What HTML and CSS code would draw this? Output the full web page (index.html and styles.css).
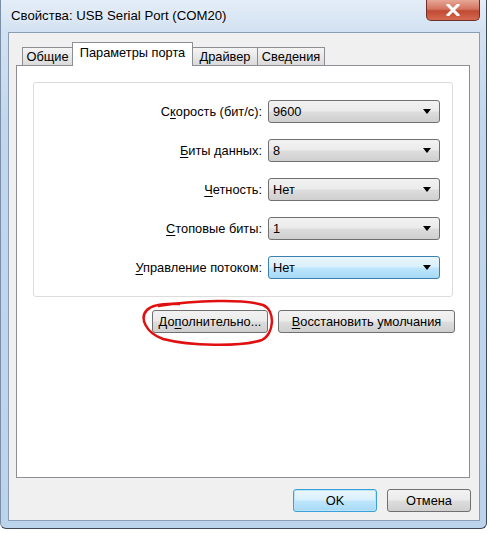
FILE: index.html
```html
<!DOCTYPE html>
<html lang="ru">
<head>
	<meta charset="UTF-8">
	<title>Свойства: USB Serial Port (COM20)</title>
	<link rel="stylesheet" href="styles.css">
</head>
<body>
	<div class="window">
		<div class="titlebar">
			<span class="title">Свойства: USB Serial Port (COM20)</span>
			<div class="close">
				<svg width="14" height="12" viewBox="0 0 14 12"><path d="M2 1 L12 11 M12 1 L2 11" stroke="#fff" stroke-width="3" stroke-linecap="square"/></svg>
			</div>
		</div>
		<div class="client">
			<div class="tabs">
				<div class="tab t1">Общие</div>
				<div class="tab t2 on">Параметры порта</div>
				<div class="tab t3">Драйвер</div>
				<div class="tab t4">Сведения</div>
			</div>
			<div class="panel">
				<div class="group">
					<div class="row">
						<span class="label">С<u>к</u>орость (бит/с):</span>
						<div class="combo"><span>9600</span><i class="arrow"></i></div>
					</div>
					<div class="row">
						<span class="label"><u>Б</u>иты данных:</span>
						<div class="combo"><span>8</span><i class="arrow"></i></div>
					</div>
					<div class="row">
						<span class="label"><u>Ч</u>етность:</span>
						<div class="combo"><span>Нет</span><i class="arrow"></i></div>
					</div>
					<div class="row">
						<span class="label"><u>С</u>топовые биты:</span>
						<div class="combo"><span>1</span><i class="arrow"></i></div>
					</div>
					<div class="row">
						<span class="label"><u>У</u>правление потоком:</span>
						<div class="combo focus"><span>Нет</span><i class="arrow"></i></div>
					</div>
				</div>
				<div class="actions">
					<div class="btn more">До<u>п</u>олнительно...</div>
					<div class="btn reset"><u>В</u>осстановить умолчания</div>
				</div>
			</div>
			<div class="footer">
				<div class="btn ok">OK</div>
				<div class="btn cancel">Отмена</div>
			</div>
		</div>
		<!-- пометки красным поверх окна -->
		<svg class="marks" width="490" height="533">
			<path d="M75 62 L186 62" stroke="#e01010" stroke-width="2.5" fill="none"/>
			<path d="M158 306 C195 300 245 299 263 305 C276 311 274 334 262 340 C240 347 190 346 163 339 C146 333 139 318 147 310 C152 305 162 303 180 304" stroke="#e01010" stroke-width="2.5" fill="none"/>
		</svg>
	</div>
</body>
</html>
```
FILE: styles.css
```css
*{margin:0; padding:0; box-sizing:border-box;}
body{background:#fff; font-family:"Liberation Sans", Arial, sans-serif; font-size:12.8px; color:#000;}
u{text-decoration:underline; text-underline-offset:2px;}

.window{position:relative; width:487px; height:529px; padding:0 6px 7px 7px; border-left:1px solid #7b8ea6; border-right:1px solid #3e4a58; border-bottom:1px solid #3e4a58; border-radius:0 0 6px 6px; background:linear-gradient(to bottom, #e4edf7 0, #d3e2f3 30px, #c2d7ee 120px, #bcd3ec 100%);}

.titlebar{height:32px; display:flex; justify-content:space-between; align-items:flex-start;}
.title{padding:8px 0 0 3px; font-size:13.2px; text-shadow:0 0 6px #fff;}
.close{width:54px; height:21px; display:flex; align-items:center; justify-content:center; border:1px solid #6d2f27; border-top:none; border-radius:0 0 5px 5px; background:linear-gradient(to bottom, #e7a796 0, #d47460 45%, #c14a34 55%, #d46a4f 100%);}

.client{height:489px; border:1px solid #8a9db5; background:#f0f0f0; padding:9px 9px 0 7px;}

.tabs{height:23px; display:flex; align-items:flex-end; padding-left:6px;}
.tab{height:18px; border:1px solid #8c8e94; border-bottom:none; border-right:none; background:linear-gradient(to bottom, #f4f4f4 0, #e8e8e8 50%, #dadada 100%); text-align:center; line-height:17px;}
.t1{width:50px;}
.t2{width:121px;}
.t3{width:65px;}
.t4{width:68px; border-right:1px solid #8c8e94;}
.tab.on{height:24px; margin-bottom:-1px; position:relative; z-index:1; background:#fff; border-right:1px solid #8c8e94; line-height:20px; margin-right:-1px;}

.panel{height:413px; border:1px solid #8c8e94; background:#fff; padding:16px 16px 0 16px;}
.group{border:1px solid #dcdcdc; border-radius:3px; padding:17px 12px 18px; display:flex; flex-direction:column; gap:17px;}
.row{display:flex; justify-content:flex-end; align-items:center; gap:6px; height:22px;}
.combo{width:172px; height:23px; border:1px solid #707070; border-radius:3px; background:linear-gradient(to bottom, #f2f2f2 0, #ebebeb 48%, #dddddd 52%, #cfcfcf 100%); display:flex; align-items:center; justify-content:space-between; padding:0 8px 0 4px;}
.combo.focus{border-color:#3c7fb1; background:linear-gradient(to bottom, #eaf6fd 0, #d9f0fc 48%, #bee6fd 52%, #a7d9f5 100%);}
.arrow{width:0; height:0; border-left:4px solid transparent; border-right:4px solid transparent; border-top:5px solid #000;}

.actions{display:flex; justify-content:flex-end; gap:10px; margin:13px -2px 0 0;}
.btn{height:23px; border:1px solid #707070; border-radius:3px; background:linear-gradient(to bottom, #f2f2f2 0, #ebebeb 48%, #dddddd 52%, #cfcfcf 100%); display:flex; align-items:center; justify-content:center;}
.more{width:116px;}
.reset{width:177px;}

.footer{display:flex; justify-content:flex-end; gap:10px; margin:11px -1px 0 0;}
.ok{width:84px; border-color:#3c9fd8; background:linear-gradient(to bottom, #eaf6fd 0, #d9f0fc 48%, #bee6fd 52%, #a7d9f5 100%); box-shadow:inset 0 0 0 1px #b9e4fb;}
.cancel{width:84px;}

.marks{position:absolute; left:-1px; top:0; pointer-events:none;}
```
